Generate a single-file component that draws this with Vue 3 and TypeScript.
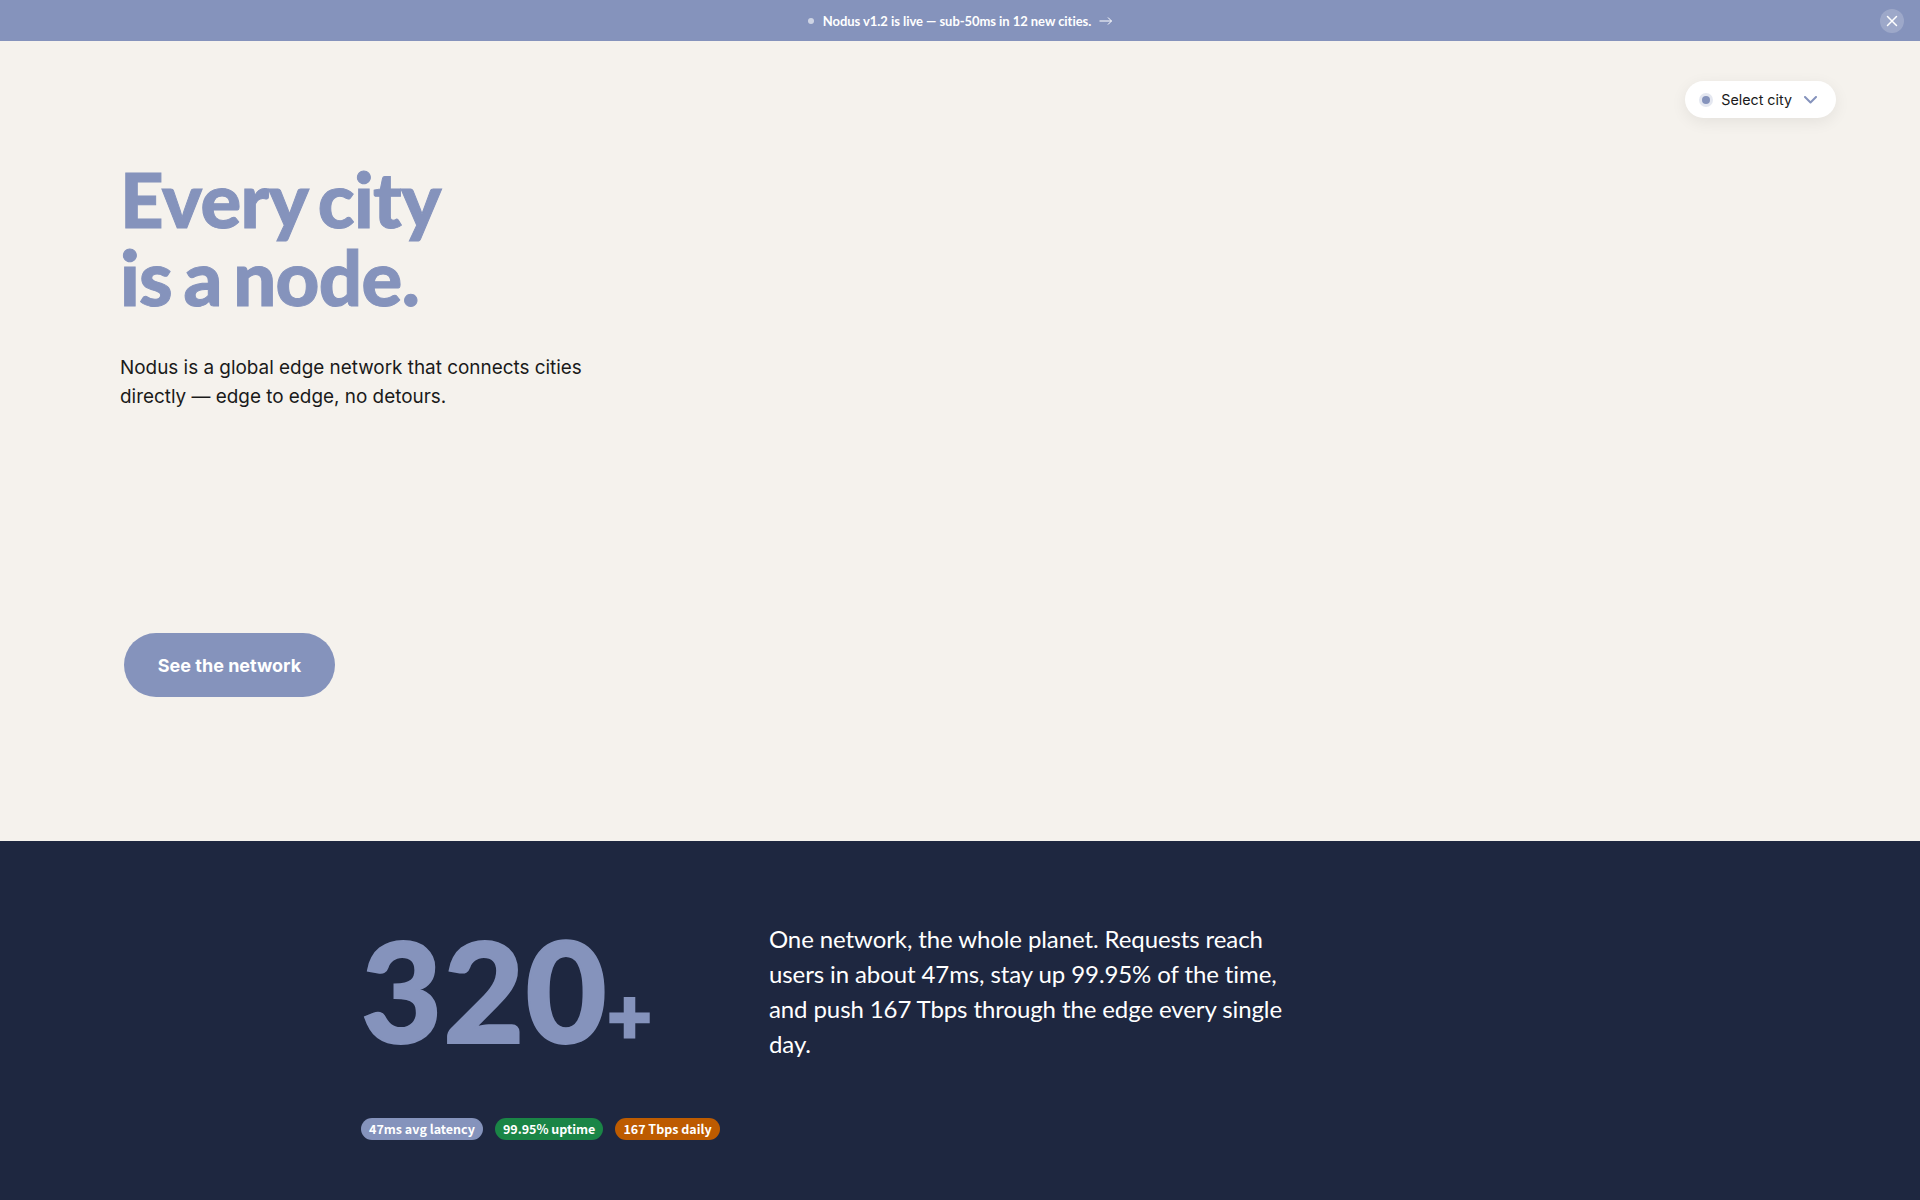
<template>
  <div class="page">
    <div class="banner">
      <div class="banner-msg">
        <span class="banner-dot" />
        <span>Nodus v1.2 is live — sub-50ms in 12 new cities.</span>
        <svg class="banner-arrow" width="13" height="10" viewBox="0 0 13 10" fill="none">
          <path d="M0.5 5H12.5M9 1.5L12.5 5L9 8.5" stroke="currentColor" stroke-width="1" />
        </svg>
      </div>
      <button class="banner-close" aria-label="Close">
        <svg width="12" height="12" viewBox="0 0 12 12" fill="none">
          <path d="M1.5 1.5L10.5 10.5M10.5 1.5L1.5 10.5" stroke="#fff" stroke-width="1.5" stroke-linecap="round" />
        </svg>
      </button>
    </div>

    <section class="hero">
      <div class="hero-top">
        <button class="city-select">
          <span class="city-dot" />
          <span>Select city</span>
          <svg width="13" height="8" viewBox="0 0 13 8" fill="none">
            <path d="M1 1L6.5 6.5L12 1" stroke="#8593BC" stroke-width="2" stroke-linecap="round" stroke-linejoin="round" />
          </svg>
        </button>
      </div>
      <h1 class="headline">Every city<br />is a node.</h1>
      <p class="lede">Nodus is a global edge network that connects cities directly — edge to edge, no detours.</p>
      <button class="cta">See the network</button>
    </section>

    <section class="stats">
      <div class="stats-row">
        <div class="count">320<span class="plus">+</span></div>
        <p class="stats-copy">
          One network, the whole planet. Requests reach users in about 47ms, stay up 99.95% of the time, and push 167 Tbps through the edge every single day.
        </p>
      </div>
      <div class="tags">
        <span v-for="t in tags" :key="t.label" class="tag" :class="t.kind">{{ t.label }}</span>
      </div>
    </section>
  </div>
</template>

<script setup lang="ts">
type Tag = { label: string; kind: string }

const tags: Tag[] = [
  { label: '47ms avg latency', kind: 'periwinkle' },
  { label: '99.95% uptime', kind: 'green' },
  { label: '167 Tbps daily', kind: 'orange' },
]
</script>

<style scoped>
.page {
  height: 1200px;
  display: flex;
  flex-direction: column;
  font-family: Inter, sans-serif;
  background: #f5f2ed;
  overflow: hidden;
}

.banner {
  position: relative;
  height: 41px;
  flex: none;
  background: #8593bc;
  color: #fff;
  display: flex;
  align-items: center;
  justify-content: center;
}

.banner-msg {
  display: flex;
  align-items: center;
  font-family: Lato, sans-serif;
  font-size: 13px;
  font-weight: 700;
  letter-spacing: -0.05px;
}

.banner-dot {
  width: 6px;
  height: 6px;
  border-radius: 50%;
  background: rgba(255, 255, 255, 0.6);
  margin-right: 9px;
}

.banner-arrow {
  margin-left: 8px;
}

.banner-close {
  position: absolute;
  right: 16px;
  top: 9px;
  width: 24px;
  height: 24px;
  padding: 0;
  border: 0;
  border-radius: 50%;
  background: rgba(255, 255, 255, 0.2);
  display: flex;
  align-items: center;
  justify-content: center;
}

.hero {
  height: 800px;
  flex: none;
  box-sizing: border-box;
  padding: 40px 84px 0 120px;
}

.hero-top {
  display: flex;
  justify-content: flex-end;
  height: 37px;
}

.city-select {
  height: 37px;
  padding: 0 19px 0 14px;
  border: 0;
  border-radius: 19px;
  background: #fff;
  box-shadow: 0 4px 16px rgba(0, 0, 0, 0.07);
  display: flex;
  align-items: center;
  gap: 8px;
  font-family: Inter, sans-serif;
  font-size: 14.3px;
  font-weight: 400;
  color: #1a1a1a;
}

.city-select svg {
  margin-left: 4px;
}

.city-dot {
  width: 8px;
  height: 8px;
  border-radius: 50%;
  background: #8593bc;
  box-shadow: 0 0 0 3px rgba(133, 147, 188, 0.22);
  margin: 0 3px;
}

.headline {
  margin: 42px 0 0;
  font-family: Lato, sans-serif;
  font-size: 76px;
  font-weight: 900;
  line-height: 78px;
  letter-spacing: -0.65px;
  word-spacing: -6px;
  color: #8593bc;
  -webkit-text-stroke: 1px #8593bc;
}

.lede {
  margin: 37px 0 0;
  width: 480px;
  font-size: 18.9px;
  line-height: 29px;
  color: #1a1a1a;
}

.cta {
  display: block;
  margin: 222px 0 0 4px;
  width: 211px;
  height: 64px;
  border: 0;
  border-radius: 32px;
  background: #8593bc;
  color: #fff;
  font-family: Inter, sans-serif;
  font-size: 18px;
  font-weight: 700;
}

.stats {
  flex: 1;
  background: #1e2740;
  box-sizing: border-box;
  padding: 80px 0 0 361px;
}

.stats-row {
  display: flex;
  gap: 0;
}

.count {
  width: 408px;
  flex: none;
  height: 130px;
  font-family: Lato, sans-serif;
  font-size: 140px;
  font-weight: 900;
  line-height: 136px;
  letter-spacing: 1px;
  color: #8593bc;
  -webkit-text-stroke: 2px #8593bc;
}

.plus {
  font-size: 76px;
  letter-spacing: 0;
  -webkit-text-stroke: 3px #8593bc;
}

.stats-copy {
  margin: 0;
  width: 520px;
  font-family: Lato, sans-serif;
  font-size: 24px;
  line-height: 35px;
  letter-spacing: -0.1px;
  color: #fff;
}

.tags {
  display: flex;
  gap: 12px;
  margin-top: 57px;
}

.tag {
  height: 22px;
  padding: 0 8px;
  border-radius: 11px;
  font-family: 'Noto Sans CJK SC', sans-serif;
  font-size: 12.5px;
  font-weight: 700;
  line-height: 22px;
  color: #fff;
}

.periwinkle {
  background: #8593bc;
}

.green {
  background: #1a8546;
}

.orange {
  background: #bd5b00;
}
</style>

<style>
body {
  background: #f5f2ed;
}
</style>
